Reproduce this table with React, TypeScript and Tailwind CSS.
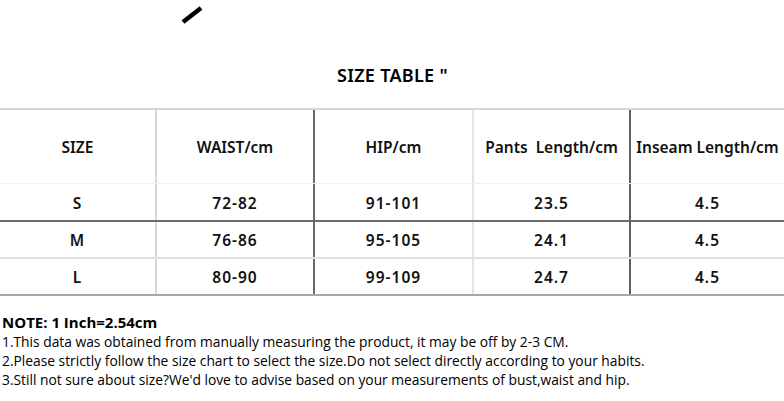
import React from 'react';
import clsx from 'clsx';

const COLS = 'grid grid-cols-[155px_158px_159px_157px_155px]';
const HEAD = ['SIZE', 'WAIST/cm', 'HIP/cm', 'Pants  Length/cm', 'Inseam Length/cm'];
const ROWS = [
  { cells: ['S', '72-82', '91-101', '23.5', '4.5'], line: 'border-b-2 border-[#6b6b6b]' },
  { cells: ['M', '76-86', '95-105', '24.1', '4.5'], line: 'border-b-2 border-[#e0e0e0]' },
  { cells: ['L', '80-90', '99-109', '24.7', '4.5'], line: 'border-b-2 border-[#a8a8a8]' },
];
// vertical rules: light / dark / light / dark
const VLINE = ['', 'border-l-2 border-[#d8d8d8]', 'border-l-2 border-[#6b6b6b]', 'border-l-2 border-[#e4e4e4]', 'border-l-2 border-[#5e5e5e]'];

export default function App() {
  return (
    <div className="w-[784px] h-[401px] bg-white text-black overflow-hidden font-['Noto_Sans','Open_Sans',sans-serif]">
      <div className="h-[55px] pl-[180px] pt-[4px]">
        <svg width="24" height="20" viewBox="0 0 24 20">
          <line x1="3" y1="18" x2="21" y2="4" stroke="#000" strokeWidth="4.5" />
        </svg>
      </div>
      <div className="h-[40px] flex items-center pl-[337px] text-[18px] font-semibold tracking-[0.3px]">
        SIZE TABLE "
      </div>
      <div className="mt-[13px] border-t-2 border-[#d6d6d6]">
        <div className={clsx(COLS, 'h-[74px] border-b border-[#f0f0f0]')}>
          {HEAD.map((h, i) => (
            <div key={h} className={clsx('flex items-center justify-center pt-[2px] text-[15.5px] font-semibold whitespace-pre text-[#111]', VLINE[i])}>
              {h}
            </div>
          ))}
        </div>
        {ROWS.map((r, ri) => (
          <div key={ri} className={clsx(COLS, ri === 0 ? 'h-[38px]' : 'h-[37px]', r.line)}>
            {r.cells.map((c, i) => (
              <div key={i} className={clsx('flex items-center justify-center pt-[3px] text-[15.5px] font-semibold tracking-[1px] text-[#111]', VLINE[i])}>
                {c}
              </div>
            ))}
          </div>
        ))}
      </div>
      <div className="pt-[17px] pl-[2px] text-[13.8px] leading-[19px] font-['Open_Sans',sans-serif] text-black">
        <div className="font-bold text-[15px]">NOTE: 1 Inch=2.54cm</div>
        <div>1.This data was obtained from manually measuring the product, it may be off by 2-3 CM.</div>
        <div>2.Please strictly follow the size chart to select the size.Do not select directly according to your habits.</div>
        <div>3.Still not sure about size?We'd love to advise based on your measurements of bust,waist and hip.</div>
      </div>
    </div>
  );
}
